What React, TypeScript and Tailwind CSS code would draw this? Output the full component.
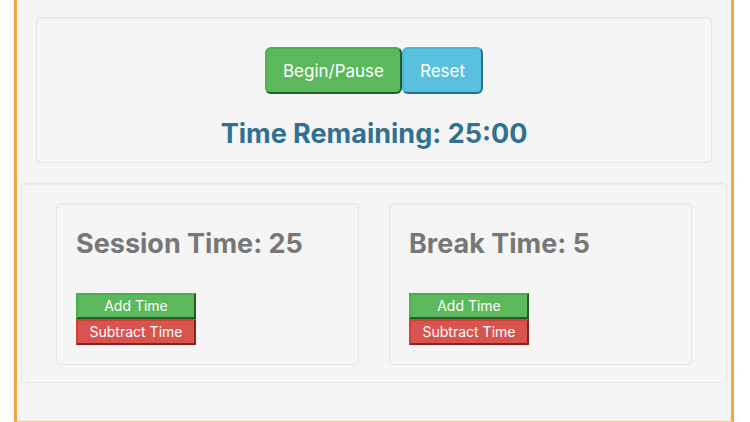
import { useEffect, useState } from "react";

type PeriodProps = {
  label: string;
  minutes: number;
  onChange: (minutes: number) => void;
};

const well =
  "rounded border border-[#e5e5e5] shadow-[inset_0_1px_1px_rgba(0,0,0,0.03)]";
const largeButton =
  "rounded-md border-2 px-4 pt-[11px] pb-[10px] text-[17px] leading-[22px] text-white";
const smallButton =
  "h-[26px] w-[120px] border-2 text-sm leading-5 text-white";
const green =
  "border-t-[#4cae4c] border-r-[#265c26] border-b-[#265c26] border-l-[#4cae4c] bg-[#5cb85c]";
const blue =
  "border-t-[#46b8da] border-r-[#237289] border-b-[#237289] border-l-[#46b8da] bg-[#5bc0de]";
const red =
  "border-t-[#d43f3a] border-r-[#872421] border-b-[#872421] border-l-[#d43f3a] bg-[#d9534f]";

function Period({ label, minutes, onChange }: PeriodProps) {
  return (
    <section className={`${well} flex-1 p-[19px]`}>
      <h2 className="mt-[5px] mb-[34px] text-[27px] leading-[31px] font-bold text-[#777777]">
        {label} Time: {minutes}
      </h2>
      <div className="flex flex-col items-start">
        <button
          type="button"
          onClick={() => onChange(minutes + 1)}
          className={`${smallButton} ${green}`}
        >
          Add Time
        </button>
        <button
          type="button"
          onClick={() => onChange(Math.max(1, minutes - 1))}
          className={`${smallButton} ${red}`}
        >
          Subtract Time
        </button>
      </div>
    </section>
  );
}

export default function App() {
  const [session, setSession] = useState(25);
  const [rest, setRest] = useState(5);
  const [seconds, setSeconds] = useState(25 * 60);
  const [running, setRunning] = useState(false);

  useEffect(() => {
    if (!running) return;
    const timer = setInterval(() => setSeconds((s) => Math.max(0, s - 1)), 1000);
    return () => clearInterval(timer);
  }, [running]);

  const changeSession = (minutes: number) => {
    setSession(minutes);
    if (!running) setSeconds(minutes * 60);
  };

  const reset = () => {
    setRunning(false);
    setSeconds(session * 60);
  };

  const clock = `${Math.floor(seconds / 60)}:${String(seconds % 60).padStart(2, "0")}`;

  return (
    <div className="bg-white pr-4 pl-[14px] font-['Inter',sans-serif]">
      <main className="border-x-[3px] border-b border-x-[#f6a440] border-b-[#f8c884] bg-[#f5f5f5] px-1 pt-[17px] pb-[38px]">
        <section className={`${well} mx-[15px] mb-5 px-[19px] pt-[29px] pb-[13px] text-center`}>
          <div className="flex justify-center">
            <button
              type="button"
              onClick={() => setRunning(!running)}
              className={`${largeButton} ${green}`}
            >
              Begin/Pause
            </button>
            <button
              type="button"
              onClick={reset}
              className={`${largeButton} ${blue}`}
            >
              Reset
            </button>
          </div>
          <h1 className="mt-6 text-[27px] leading-[31px] font-bold text-[#31708f]">
            Time Remaining: {clock}
          </h1>
        </section>
        <div className={`${well} flex gap-[30px] px-[34px] pt-[19px] pb-[17px]`}>
          <Period label="Session" minutes={session} onChange={changeSession} />
          <Period label="Break" minutes={rest} onChange={setRest} />
        </div>
      </main>
    </div>
  );
}
